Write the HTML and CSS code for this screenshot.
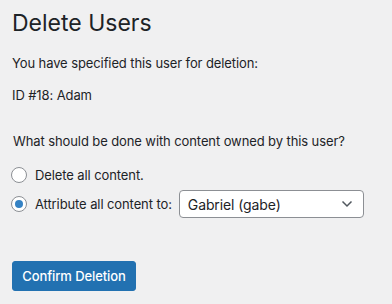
FILE: index.html
```html
<!DOCTYPE html>
<html lang="en">

<head>
  <meta charset="UTF-8">
  <meta name="viewport" content="width=device-width, initial-scale=1.0">
  <title>Delete Users</title>
  <link rel="stylesheet" href="styles.css">
</head>

<body>

  <div class="wrap">
    <h1 class="page-title">Delete Users</h1>

    <p class="note">You have specified this user for deletion:</p>
    <p class="user-id">ID #18: Adam</p>

    <fieldset class="delete-options">
      <p class="question">What should be done with content owned by this user?</p>

      <label class="option">
        <input type="radio" name="delete_option" class="radio">
        <span>Delete all content.</span>
      </label>
      <label class="option option-attr">
        <input type="radio" name="delete_option" class="radio" checked>
        <span>Attribute all content to:</span>
        <span class="select">
          <span class="select-value">Gabriel (gabe)</span>
          <svg class="chevron" width="12" height="8" viewBox="0 0 12 8">
            <path d="M1.5 1.5 L6 6 L10.5 1.5" fill="none" stroke="#50575e" stroke-width="1.5"/>
          </svg>
        </span>
      </label>
    </fieldset>

    <button class="button-primary">Confirm Deletion</button>
  </div>

</body>
</html>
```

FILE: styles.css
```css
body {
  margin: 0;
  background: #f0f0f1;
  color: #1d2327;
  font-family: Inter, "Noto Sans", sans-serif;
  font-size: 13px;
  letter-spacing: -0.1px;
}

.wrap {
  padding: 8px 12px 0 12px;
}

.page-title {
  margin: 0 0 15px;
  font-size: 23px;
  font-weight: 400;
  line-height: 30px;
  letter-spacing: 0;
}

.note,
.user-id {
  margin: 0;
  line-height: 20px;
}

.user-id {
  margin-top: 12px;
}

.delete-options {
  border: none;
  margin: 26px 0 0;
  padding: 0;
}

.question {
  margin: 0 0 14px 1px;
  line-height: 20px;
}

.option {
  display: flex;
  align-items: center;
  gap: 8px;
  height: 20px;
}

.option-attr {
  margin-top: 5px;
  height: 28px;
}

.radio {
  appearance: none;
  margin: 0 0 0 -1px;
  width: 16px;
  height: 16px;
  border: 1px solid #8c8f94;
  border-radius: 50%;
  background: #fff;
  display: flex;
  align-items: center;
  justify-content: center;
}

.radio:checked::before {
  content: "";
  width: 8px;
  height: 8px;
  border-radius: 50%;
  background: #3582c4;
}

.select {
  margin-left: -1px;
  width: 185px;
  height: 28px;
  box-sizing: border-box;
  border: 1px solid #8c8f94;
  border-radius: 4px;
  background: #fff;
  display: flex;
  align-items: center;
  justify-content: space-between;
  padding: 0 10px 0 8px;
  font-size: 14px;
}

.button-primary {
  margin-top: 43px;
  width: 124px;
  height: 30px;
  background: #2271b1;
  border: 1px solid #2271b1;
  border-radius: 3px;
  color: #fff;
  font-family: inherit;
  font-size: 13px;
  font-weight: 500;
  letter-spacing: -0.1px;
  padding: 0;
}
```
